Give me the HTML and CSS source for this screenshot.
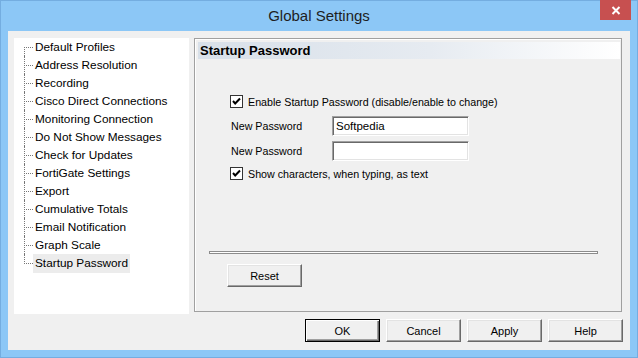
FILE: index.html
```html
<!DOCTYPE html>
<html lang="en">
<head>
  <meta charset="UTF-8">
  <title>Global Settings</title>
  <link rel="stylesheet" href="styles.css">
</head>
<body>
  <div class="window">
    <!-- Title bar -->
    <div class="titlebar">
      <span class="title">Global Settings</span>
      <button class="close-btn" aria-label="Close">
        <svg width="10" height="9" viewBox="0 0 10 9"><path d="M1.5 1 L8.5 8 M8.5 1 L1.5 8" stroke="#fff" stroke-width="2"/></svg>
      </button>
    </div>

    <div class="client">
      <div class="main">
        <!-- Settings tree -->
        <ul class="tree">
          <li><span>Default Profiles</span></li>
          <li><span>Address Resolution</span></li>
          <li><span>Recording</span></li>
          <li><span>Cisco Direct Connections</span></li>
          <li><span>Monitoring Connection</span></li>
          <li><span>Do Not Show Messages</span></li>
          <li><span>Check for Updates</span></li>
          <li><span>FortiGate Settings</span></li>
          <li><span>Export</span></li>
          <li><span>Cumulative Totals</span></li>
          <li><span>Email Notification</span></li>
          <li><span>Graph Scale</span></li>
          <li class="selected"><span>Startup Password</span></li>
        </ul>

        <!-- Settings page -->
        <div class="page">
          <div class="page-head">Startup Password</div>
          <div class="page-body">
            <div class="check">
              <span class="box"><svg width="11" height="11" viewBox="0 0 11 11"><path d="M2 5 L4.2 7.5 L9 2.5" fill="none" stroke="#000" stroke-width="2"/></svg></span>
              <span>Enable Startup Password (disable/enable to change)</span>
            </div>
            <div class="field first">
              <span class="field-label">New Password</span>
              <span class="input">Softpedia</span>
            </div>
            <div class="field">
              <span class="field-label">New Password</span>
              <span class="input"></span>
            </div>
            <div class="check second">
              <span class="box"><svg width="11" height="11" viewBox="0 0 11 11"><path d="M2 5 L4.2 7.5 L9 2.5" fill="none" stroke="#000" stroke-width="2"/></svg></span>
              <span>Show characters, when typing, as text</span>
            </div>
          </div>
          <div class="separator"></div>
          <button class="btn reset-btn">Reset</button>
        </div>
      </div>

      <!-- Dialog buttons -->
      <div class="actions">
        <button class="btn default">OK</button>
        <button class="btn">Cancel</button>
        <button class="btn">Apply</button>
        <button class="btn">Help</button>
      </div>
    </div>
  </div>
</body>
</html>
```

FILE: styles.css
```css
:root {
  --frame: #8cc7f6;
  --face: #f0f0f0;
  --shadow: #a0a0a0;
  --dark-shadow: #696969;
  --text: #000;
}

* {
  margin: 0;
  padding: 0;
  box-sizing: border-box;
}

body {
  background: var(--frame);
  font-family: "Liberation Sans", Arial, sans-serif;
  color: var(--text);
}

.window {
  width: 638px;
  height: 358px;
  background: var(--frame);
  padding: 0 8px 8px;
  box-shadow: inset 0 0 0 1px #74ade0;
  display: flex;
  flex-direction: column;
}

/* Title bar */
.titlebar {
  height: 31px;
  display: grid;
  grid-template-columns: 1fr auto 1fr;
}

.title {
  grid-column: 2;
  align-self: center;
  font-size: 15px;
  color: #1e1e1e;
  padding-bottom: 1px;
}

.close-btn {
  grid-column: 3;
  justify-self: end;
  width: 31px;
  height: 20px;
  margin-right: -1px;
  border: none;
  background: #c75050;
  display: flex;
  align-items: center;
  justify-content: center;
}

/* Client area */
.client {
  flex: 1;
  background: var(--face);
  padding: 7px 8px 0 6px;
}

.main {
  display: flex;
  align-items: flex-start;
  gap: 5px;
}

/* Tree */
.tree {
  list-style: none;
  width: 175px;
  height: 276px;
  background: #fff;
  font-size: 11.8px;
}

.tree li {
  position: relative;
  height: 18px;
  padding-left: 19px;
  display: flex;
  align-items: center;
}

.tree li::before {
  content: "";
  position: absolute;
  left: 10px;
  top: 9px;
  width: 9px;
  border-top: 1px dotted #777;
}

.tree li::after {
  content: "";
  position: absolute;
  left: 10px;
  top: 0;
  height: 18px;
  border-left: 1px dotted #777;
}

.tree li:first-child::after {
  top: 9px;
  height: 9px;
}

.tree li:last-child::after {
  height: 10px;
}

.tree li span {
  padding: 0 2px;
  line-height: 19px;
}

.tree li.selected span {
  background: #ececec;
}

/* Page */
.page {
  width: 428px;
  height: 274px;
  border: 1px solid var(--shadow);
  box-shadow: inset 1px 1px 0 #fff;
  display: flex;
  flex-direction: column;
}

.page-head {
  height: 17px;
  margin: 3px 1px 0 3px;
  padding-left: 2px;
  background: linear-gradient(to right, #d8e0e9, #e6ebf1 55%, #ffffff);
  font-size: 13px;
  font-weight: bold;
  line-height: 17px;
}

.page-body {
  flex: 1;
  padding: 36px 0 0 35px;
  font-size: 10.7px;
}

.check {
  display: flex;
  align-items: center;
  gap: 5px;
  height: 13px;
}

.check.second {
  margin-top: 6px;
}

.box {
  width: 13px;
  height: 13px;
  border: 1px solid #333;
  background: #fff;
  display: flex;
}

.field {
  display: flex;
  align-items: center;
  margin-top: 5px;
}

.field.first {
  margin-top: 8px;
}

.field-label {
  width: 102px;
  padding-left: 1px;
}

.input {
  width: 137px;
  height: 20px;
  background: #fff;
  border-top: 1px solid var(--shadow);
  border-left: 1px solid var(--shadow);
  border-right: 1px solid #fff;
  border-bottom: 1px solid #fff;
  box-shadow: inset 1px 1px 0 var(--dark-shadow), inset -1px -1px 0 #e3e3e3;
  padding: 3px 0 0 3px;
  font-size: 11.5px;
}

.separator {
  height: 3px;
  margin: 0 23px 0 14px;
  border: 1px solid #8c8c8c;
  background: #fff;
}

/* Buttons */
.btn {
  width: 75px;
  height: 23px;
  background: var(--face);
  border: 1px solid;
  border-color: #fff var(--dark-shadow) var(--dark-shadow) #fff;
  box-shadow: inset -1px -1px 0 var(--shadow), inset 1px 1px 0 #e3e3e3;
  font-family: "Liberation Sans", Arial, sans-serif;
  font-size: 11px;
  color: var(--text);
}

.btn.default {
  border-color: #000;
  box-shadow: inset 1px 1px 0 #fff, inset -1px -1px 0 var(--dark-shadow), inset -2px -2px 0 var(--shadow);
}

.reset-btn {
  margin: 10px 0 24px 32px;
}

.actions {
  display: flex;
  justify-content: flex-end;
  gap: 6px;
  margin: 5px -1px 0 0;
}
```
